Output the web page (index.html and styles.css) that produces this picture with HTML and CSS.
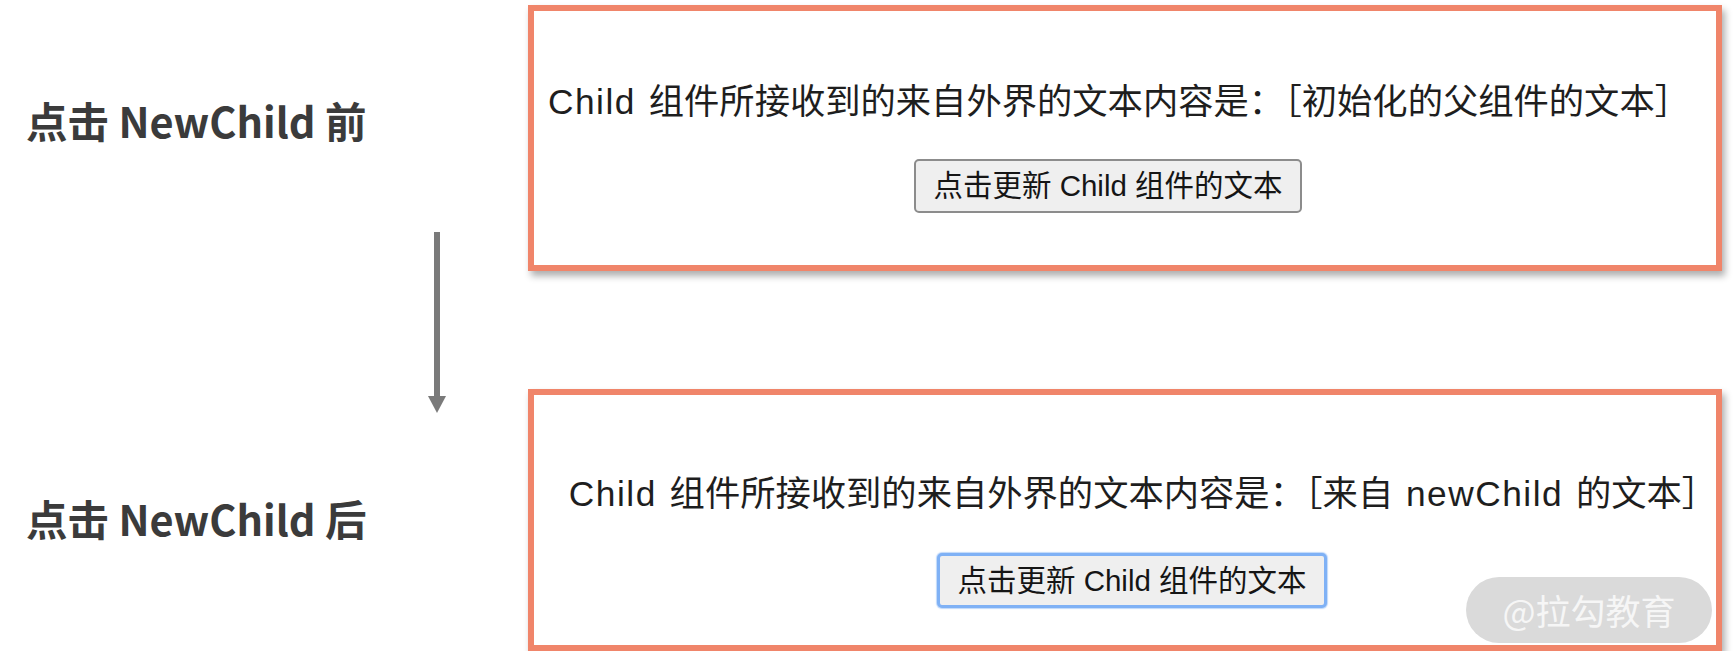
FILE: index.html
```html
<!DOCTYPE html>
<html lang="zh-CN">
<head>
<meta charset="utf-8">
<title>NewChild</title>
<link rel="stylesheet" href="styles.css">
</head>
<body>
<div class="page">
  <div class="labels">
    <h2 class="label label--before">点击 NewChild 前</h2>
    <svg class="arrow" width="18" height="181" viewBox="0 0 18 181" aria-hidden="true">
      <rect x="6" y="0" width="6" height="166" fill="#7a7a7a"/>
      <polygon points="0,164 18,164 9,181" fill="#7a7a7a"/>
    </svg>
    <h2 class="label label--after">点击 NewChild 后</h2>
  </div>
  <div class="shots">
    <div class="shot shot--before">
      <p class="shot-text"><span class="latin">Child</span> 组件所接收到的来自外界的文本内容是：［初始化的父组件的文本］</p>
      <button class="btn" type="button">点击更新 Child 组件的文本</button>
    </div>
    <div class="shot shot--after">
      <p class="shot-text"><span class="latin">Child</span> 组件所接收到的来自外界的文本内容是：［来自 <span class="latin">newChild</span> 的文本］</p>
      <button class="btn btn--focus" type="button">点击更新 Child 组件的文本</button>
      <div class="watermark">@拉勾教育</div>
    </div>
  </div>
</div>
</body>
</html>
```

FILE: styles.css
```css
html, body {
  margin: 0;
  padding: 0;
  background: #ffffff;
}

.page {
  display: grid;
  grid-template-columns: 528px 1194px;
  padding-top: 5px;
}

.labels {
  display: flex;
  flex-direction: column;
  align-items: flex-start;
  padding-top: 85px;
}

.label {
  margin: 0;
  padding-left: 26px;
  font-family: "Noto Sans CJK SC", "Noto Sans", sans-serif;
  font-weight: 700;
  font-size: 41.5px;
  line-height: 60px;
  color: #3b3b3b;
  white-space: nowrap;
}

.arrow {
  display: block;
  margin-top: 82px;
  margin-left: 428px;
}

.label--after {
  margin-top: 75px;
}

.shots {
  display: flex;
  flex-direction: column;
  gap: 118px;
}

.shot {
  position: relative;
  box-sizing: border-box;
  width: 1194px;
  border: 6px solid #f0856a;
  background: #ffffff;
  box-shadow: 3px 5px 7px rgba(0, 0, 0, 0.32);
  display: flex;
  flex-direction: column;
  align-items: center;
}

.shot--before {
  height: 266px;
  padding: 71px 34px 0 0;
}

.shot--after {
  height: 262px;
  padding: 79px 0 0 14px;
}

.shot-text {
  margin: 0;
  padding-left: 22px;
  font-family: "Liberation Sans", "Noto Sans CJK SC", sans-serif;
  font-size: 35.3px;
  word-spacing: 3px;
  line-height: 40px;
  color: #1e1e1e;
  white-space: nowrap;
}

.latin {
  letter-spacing: 1.5px;
}

.btn {
  box-sizing: border-box;
  height: 54px;
  margin-top: 37px;
  padding: 0 17px;
  font-family: "Liberation Sans", "Noto Sans CJK SC", sans-serif;
  font-size: 29.5px;
  line-height: 1;
  color: #151515;
  background: #efefef;
  border: 2px solid #8c8c8c;
  border-radius: 5px;
  white-space: nowrap;
}

.btn--focus {
  height: 55px;
  margin-top: 39px;
  border: 3px solid #7fb1f5;
  box-shadow: 0 0 1px 1px rgba(127, 177, 245, 0.5);
}

.watermark {
  position: absolute;
  right: 4px;
  bottom: 2px;
  width: 246px;
  height: 66px;
  border-radius: 33px;
  background: #dadada;
  color: #f6f6f6;
  font-family: "Noto Sans CJK SC", sans-serif;
  font-size: 35px;
  line-height: 66px;
  text-align: center;
}
```
